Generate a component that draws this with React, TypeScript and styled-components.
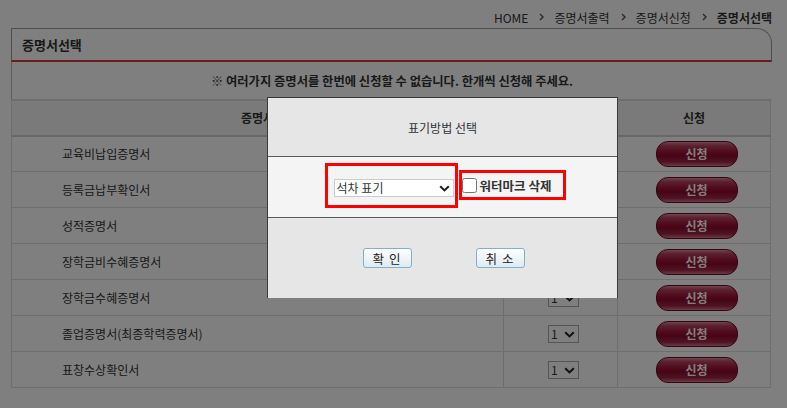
import React from 'react';
import styled, { createGlobalStyle } from 'styled-components';

const certificates = [
  '교육비납입증명서',
  '등록금납부확인서',
  '성적증명서',
  '장학금비수혜증명서',
  '장학금수혜증명서',
  '졸업증명서(최종학력증명서)',
  '표창수상확인서',
];

function App() {
  return (
    <>
      <GlobalStyle />
      <Page>
        <Breadcrumb>
          <Crumb>HOME</Crumb>
          <Separator />
          <Crumb>증명서출력</Crumb>
          <Separator />
          <Crumb>증명서신청</Crumb>
          <Separator />
          <Crumb $current>증명서선택</Crumb>
        </Breadcrumb>

        <TabHeader>증명서선택</TabHeader>
        <Notice>※ 여러가지 증명서를 한번에 신청할 수 없습니다. 한개씩 신청해 주세요.</Notice>

        <CertTable>
          <colgroup>
            <col style={{ width: 492 }} />
            <col style={{ width: 114 }} />
            <col style={{ width: 153 }} />
          </colgroup>
          <thead>
            <tr>
              <HeadCell>증명서</HeadCell>
              <HeadCell>매수</HeadCell>
              <HeadCell>신청</HeadCell>
            </tr>
          </thead>
          <tbody>
            {certificates.map((name) => (
              <tr key={name}>
                <NameCell>{name}</NameCell>
                <CenterCell>
                  <SelectWrap $w={31} $border="#aaa">
                    <NativeSelect defaultValue="1">
                      <option value="1">1</option>
                      <option value="2">2</option>
                      <option value="3">3</option>
                    </NativeSelect>
                    <Chevron />
                  </SelectWrap>
                </CenterCell>
                <CenterCell>
                  <ApplyButton type="button">신청</ApplyButton>
                </CenterCell>
              </tr>
            ))}
          </tbody>
        </CertTable>
      </Page>

      <Backdrop />
      <Dialog>
        <DialogTitle>표기방법 선택</DialogTitle>
        <DialogBody>
          <Highlight $kind="select">
            <SelectWrap $w={120} $border="#ccc">
              <NativeSelect defaultValue="rank">
                <option value="rank">석차 표기</option>
                <option value="none">석차 미표기</option>
              </NativeSelect>
              <Chevron />
            </SelectWrap>
          </Highlight>
          <Highlight $kind="check">
            <CheckBox type="checkbox" id="wm" />
            <CheckLabel htmlFor="wm">워터마크 삭제</CheckLabel>
          </Highlight>
        </DialogBody>
        <DialogFooter>
          <DialogButton type="button">확 인</DialogButton>
          <DialogButton type="button">취 소</DialogButton>
        </DialogFooter>
      </Dialog>
    </>
  );
}

function Separator() {
  return (
    <SepIcon width="5" height="8" viewBox="0 0 5 8">
      <path d="M1 1 L4 4 L1 7" fill="none" stroke="#555" strokeWidth="1.4" />
    </SepIcon>
  );
}

function Chevron() {
  return (
    <ChevronIcon width="11" height="7" viewBox="0 0 11 7">
      <path d="M1.2 1.2 L5.5 5.4 L9.8 1.2" fill="none" stroke="#222" strokeWidth="2.1" />
    </ChevronIcon>
  );
}

const GlobalStyle = createGlobalStyle`
  *, *::before, *::after { box-sizing: border-box; }
  html, body {
    margin: 0;
    padding: 0;
    background: #fff;
  }
  body {
    font-family: 'Noto Sans CJK KR', 'Noto Sans', sans-serif;
    color: #333;
  }
`;

const Page = styled.div`
  width: 787px;
  height: 408px;
  padding: 0 15px 0 11px;
`;

const Breadcrumb = styled.div`
  display: flex;
  justify-content: flex-end;
  align-items: center;
  height: 28px;
  padding-top: 8px;
  font-size: 12px;
  color: #333;
`;

const Crumb = styled.span<{ $current?: boolean }>`
  font-weight: ${(p) => (p.$current ? 700 : 400)};
  line-height: 20px;
`;

const SepIcon = styled.svg`
  margin: 0 10px 2px 11px;
`;

const TabHeader = styled.div`
  height: 34px;
  border: 1px solid #9a9a9a;
  border-bottom: 2px solid #d63c3c;
  border-top-right-radius: 15px;
  display: flex;
  align-items: center;
  padding-left: 10px;
  font-size: 13px;
  font-weight: 700;
  color: #333;
`;

const Notice = styled.div`
  height: 38px;
  border-left: 1px solid #bbb;
  border-bottom: 1px solid #ddd;
  display: flex;
  align-items: center;
  justify-content: center;
  font-size: 12.3px;
  font-weight: 700;
  color: #333;
`;

const CertTable = styled.table`
  width: 759px;
  border-collapse: collapse;
  table-layout: fixed;
  font-size: 12px;
  color: #333;
`;

const HeadCell = styled.th`
  height: 35px;
  padding: 0;
  background: #f4f4f4;
  border: 1px solid #dcdcdc;
  border-bottom: 2px solid #d0d0d0;
  font-size: 12px;
  font-weight: 700;
  text-align: center;
`;

const NameCell = styled.td`
  height: 36px;
  padding: 0 0 0 50px;
  border: 1px solid #dcdcdc;
`;

const CenterCell = styled.td`
  height: 36px;
  padding: 0;
  border: 1px solid #dcdcdc;
  text-align: center;
  vertical-align: middle;
`;

const SelectWrap = styled.span<{ $w: number; $border: string }>`
  position: relative;
  display: inline-flex;
  width: ${(p) => p.$w}px;
  height: 18px;
  border: 1px solid ${(p) => p.$border};
  background: #fff;
  vertical-align: middle;
  margin-left: ${(p) => (p.$w < 60 ? '6px' : '0')};
`;

const NativeSelect = styled.select`
  appearance: none;
  width: 100%;
  height: 100%;
  padding: 0 14px 0 2px;
  border: 0;
  border-radius: 0;
  background: transparent;
  font-family: inherit;
  font-size: 12px;
  line-height: 16px;
  color: #333;
  outline: none;
`;

const ChevronIcon = styled.svg`
  position: absolute;
  right: 3px;
  top: 5px;
  pointer-events: none;
`;

const ApplyButton = styled.button`
  width: 82px;
  height: 26px;
  margin-left: 5px;
  border: 1px solid #6a0a24;
  border-radius: 12px;
  background: linear-gradient(
    to bottom,
    #d98aa0 0%,
    #b8405e 16%,
    #a0143a 42%,
    #8c0a2c 58%,
    #a3284a 84%,
    #cf7890 100%
  );
  color: #fff;
  font-family: inherit;
  font-size: 12px;
  font-weight: 700;
  vertical-align: middle;
  cursor: pointer;
`;

const Backdrop = styled.div`
  position: fixed;
  inset: 0;
  background: rgba(0, 0, 0, 0.5);
`;

const Dialog = styled.div`
  position: fixed;
  left: 267px;
  top: 97px;
  width: 351px;
  height: 201px;
  background: #e6e6e6;
  border: 1px solid #3a3a3a;
  border-bottom: 0;
  display: flex;
  flex-direction: column;
`;

const DialogTitle = styled.div`
  height: 59px;
  border-bottom: 1px solid #5a5a5a;
  display: flex;
  align-items: center;
  justify-content: center;
  font-size: 12px;
  color: #333;
`;

const DialogBody = styled.div`
  height: 61px;
  padding: 0 0 4px 6px;
  background: #f4f4f4;
  border-bottom: 1px solid #5a5a5a;
  display: flex;
  align-items: center;
  justify-content: center;
`;

const Highlight = styled.div<{ $kind: 'select' | 'check' }>`
  display: flex;
  align-items: center;
  border: 3px solid #ff0000;
  padding: ${(p) => (p.$kind === 'select' ? '13px 1px 8px 6px' : '0 12px 0 0')};
  height: ${(p) => (p.$kind === 'select' ? '45px' : '30px')};
  margin-left: ${(p) => (p.$kind === 'check' ? '1px' : '0')};
`;

const CheckBox = styled.input`
  width: 15px;
  height: 15px;
  margin: 0 3px 0 0;
`;

const CheckLabel = styled.label`
  font-size: 12.5px;
  font-weight: 700;
  color: #333;
`;

const DialogFooter = styled.div`
  flex: 1;
  display: flex;
  align-items: center;
  justify-content: center;
  gap: 64px;
  padding-left: 2px;
`;

const DialogButton = styled.button`
  width: 49px;
  height: 20px;
  padding: 0;
  border: 1px solid #7fb0cc;
  border-radius: 3px;
  background: linear-gradient(to bottom, #ffffff, #dfeaf2);
  font-family: inherit;
  font-size: 12.5px;
  letter-spacing: 1px;
  color: #222;
  cursor: pointer;
`;

export default App;
